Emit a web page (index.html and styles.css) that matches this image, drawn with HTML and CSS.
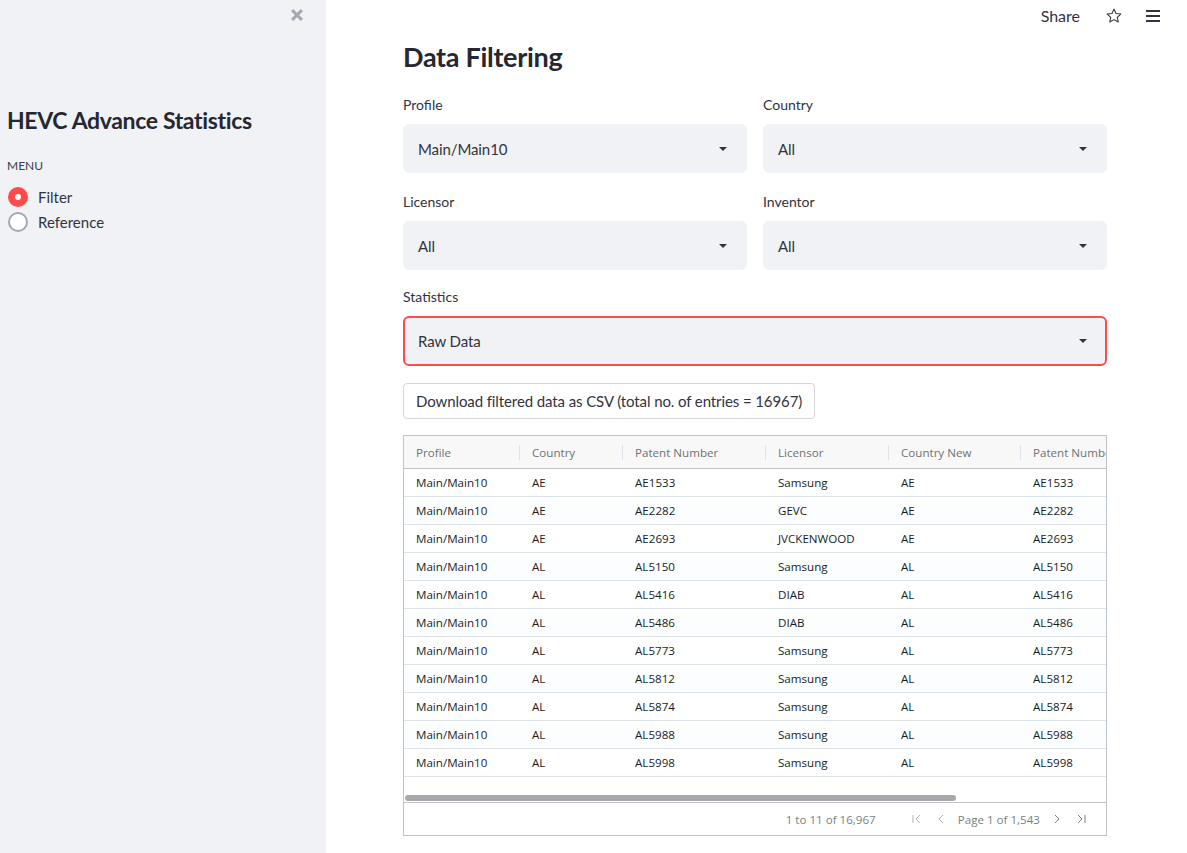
FILE: index.html
```html
<!DOCTYPE html>
<html lang="en">
<head>
<meta charset="utf-8">
<title>HEVC Advance Statistics</title>
<link rel="stylesheet" href="styles.css">
</head>
<body>
<div class="app">
  <aside class="sidebar">
    <div class="sidebar-top">
      <svg class="close-icon" width="18" height="18" viewBox="0 0 24 24"><path d="M5.5 5.5L18.5 18.5M18.5 5.5L5.5 18.5" fill="none" stroke="#a3a8b4" stroke-width="4" stroke-linecap="butt"/></svg>
    </div>
    <h2 class="side-title">HEVC Advance Statistics</h2>
    <div class="menu-label">MENU</div>
    <div class="radio-group">
      <div class="radio-item"><span class="radio checked"></span><span class="radio-text">Filter</span></div>
      <div class="radio-item"><span class="radio"></span><span class="radio-text">Reference</span></div>
    </div>
  </aside>
  <main class="main">
    <header class="toolbar">
      <span class="share">Share</span>
      <svg class="star" width="18" height="18" viewBox="0 0 24 24"><path d="M12 2.8l2.7 5.9 6.4.7-4.8 4.3 1.4 6.3L12 16.8l-5.7 3.2 1.4-6.3-4.8-4.3 6.4-.7z" fill="none" stroke="#31333f" stroke-width="1.4" stroke-linejoin="round"/></svg>
      <svg class="burger" width="16" height="16" viewBox="0 0 16 16"><path d="M1 3h14M1 8h14M1 13h14" stroke="#31333f" stroke-width="1.8"/></svg>
    </header>
    <div class="content">
      <h1 class="title">Data Filtering</h1>
      <div class="grid2">
        <div class="widget">
          <label class="wlabel">Profile</label>
          <div class="select"><span>Main/Main10</span><span class="caret"></span></div>
        </div>
        <div class="widget">
          <label class="wlabel">Country</label>
          <div class="select"><span>All</span><span class="caret"></span></div>
        </div>
        <div class="widget">
          <label class="wlabel">Licensor</label>
          <div class="select"><span>All</span><span class="caret"></span></div>
        </div>
        <div class="widget">
          <label class="wlabel">Inventor</label>
          <div class="select"><span>All</span><span class="caret"></span></div>
        </div>
      </div>
      <div class="widget">
        <label class="wlabel">Statistics</label>
        <div class="select focused"><span>Raw Data</span><span class="caret"></span></div>
      </div>
      <button class="dl-btn">Download filtered data as CSV (total no. of entries = 16967)</button>
      <div class="table">
        <div class="thead row">
          <div class="th">Profile</div>
          <div class="th">Country</div>
          <div class="th">Patent Number</div>
          <div class="th">Licensor</div>
          <div class="th">Country New</div>
          <div class="th">Patent Number</div>
        </div>
        <div class="tbody">
          <div class="row tr"><div>Main/Main10</div><div>AE</div><div>AE1533</div><div>Samsung</div><div>AE</div><div>AE1533</div></div>
          <div class="row tr"><div>Main/Main10</div><div>AE</div><div>AE2282</div><div>GEVC</div><div>AE</div><div>AE2282</div></div>
          <div class="row tr"><div>Main/Main10</div><div>AE</div><div>AE2693</div><div>JVCKENWOOD</div><div>AE</div><div>AE2693</div></div>
          <div class="row tr"><div>Main/Main10</div><div>AL</div><div>AL5150</div><div>Samsung</div><div>AL</div><div>AL5150</div></div>
          <div class="row tr"><div>Main/Main10</div><div>AL</div><div>AL5416</div><div>DIAB</div><div>AL</div><div>AL5416</div></div>
          <div class="row tr"><div>Main/Main10</div><div>AL</div><div>AL5486</div><div>DIAB</div><div>AL</div><div>AL5486</div></div>
          <div class="row tr"><div>Main/Main10</div><div>AL</div><div>AL5773</div><div>Samsung</div><div>AL</div><div>AL5773</div></div>
          <div class="row tr"><div>Main/Main10</div><div>AL</div><div>AL5812</div><div>Samsung</div><div>AL</div><div>AL5812</div></div>
          <div class="row tr"><div>Main/Main10</div><div>AL</div><div>AL5874</div><div>Samsung</div><div>AL</div><div>AL5874</div></div>
          <div class="row tr"><div>Main/Main10</div><div>AL</div><div>AL5988</div><div>Samsung</div><div>AL</div><div>AL5988</div></div>
          <div class="row tr"><div>Main/Main10</div><div>AL</div><div>AL5998</div><div>Samsung</div><div>AL</div><div>AL5998</div></div>
        </div>
        <div class="hscroll"><div class="thumb"></div></div>
        <div class="tfoot">
          <span class="count">1 to 11 of 16,967</span>
          <svg class="pg" width="12" height="12" viewBox="0 0 12 12"><path d="M2 2v8M9 2L5 6l4 4" fill="none" stroke="#aeb2b8" stroke-width="1"/></svg>
          <svg class="pg" width="12" height="12" viewBox="0 0 12 12"><path d="M8 2L4 6l4 4" fill="none" stroke="#aeb2b8" stroke-width="1"/></svg>
          <span class="page">Page 1 of 1,543</span>
          <svg class="pg" width="12" height="12" viewBox="0 0 12 12"><path d="M4 2l4 4-4 4" fill="none" stroke="#7a7f85" stroke-width="1"/></svg>
          <svg class="pg" width="12" height="12" viewBox="0 0 12 12"><path d="M3 2l4 4-4 4M10 2v8" fill="none" stroke="#7a7f85" stroke-width="1"/></svg>
        </div>
      </div>
    </div>
  </main>
</div>
</body>
</html>
```
FILE: styles.css
```css
* { box-sizing: border-box; }
html, body { margin: 0; padding: 0; }
body {
  font-family: Lato, "Liberation Sans", sans-serif;
  color: #262730;
  background: #ffffff;
  width: 1187px;
  height: 853px;
  overflow: hidden;
}
.app { display: flex; height: 853px; }
.sidebar {
  width: 326px;
  flex: 0 0 326px;
  background: #f0f2f6;
  padding: 0 0 0 7px;
}
.sidebar-top {
  display: flex;
  justify-content: flex-end;
  padding: 6px 20px 0 0;
  height: 26px;
}
.side-title {
  margin: 79px 0 0 0;
  font-size: 23px;
  font-weight: 700;
  line-height: 30px;
  letter-spacing: -0.35px;
}
.menu-label {
  margin-top: 23px;
  font-size: 12px;
  line-height: 16px;
  color: #3c3d47;
}
.radio-group { margin-top: 13px; display: flex; flex-direction: column; gap: 5px; }
.radio-item { display: flex; align-items: center; gap: 10px; height: 20px; }
.radio {
  width: 20px; height: 20px; border-radius: 50%;
  border: 2px solid #a3a8b4; background: #fff; position: relative;
  margin-left: 1px;
}
.radio.checked {
  border: none; background: #ff4b4b;
}
.radio.checked::after {
  content: ""; position: absolute; left: 7px; top: 7px; width: 6px; height: 6px; border-radius: 50%; background: #fff;
}
.radio-text { font-size: 15px; color: #31333f; }

.main { flex: 1; }
.toolbar {
  height: 31px;
  display: flex;
  align-items: center;
  justify-content: flex-end;
  padding-right: 26px;
}
.share { font-size: 16px; color: #31333f; margin-right: 25px; }
.star { margin-right: 22px; }
.content { width: 704px; margin-left: 77px; }
.title {
  margin: 9px 0 0 0;
  font-size: 27px;
  font-weight: 700;
  line-height: 34px;
  letter-spacing: -0.3px;
  color: #262730;
}
.grid2 {
  display: grid;
  grid-template-columns: 1fr 1fr;
  column-gap: 16px;
  row-gap: 19px;
  margin-top: 21px;
}
.content > .widget { margin-top: 17px; }
.widget { display: flex; flex-direction: column; }
.wlabel {
  font-size: 14px;
  line-height: 19px;
  margin-bottom: 10px;
  color: #31333f;
}
.select {
  height: 49px;
  background: #f0f2f6;
  border-radius: 6px;
  display: flex;
  align-items: center;
  justify-content: space-between;
  padding: 0 19px 0 14px;
  font-size: 15px;
  letter-spacing: -0.1px;
  color: #31333f;
  border: 1px solid #f0f2f6;
}
.select.focused { border: 2px solid #ff4b4b; padding-left: 13px; padding-right: 18px; height: 50px; }
.caret {
  width: 0; height: 0;
  border-left: 4px solid transparent;
  border-right: 4px solid transparent;
  border-top: 4px solid #31333f;
}
.dl-btn {
  margin-top: 17px;
  height: 36px;
  padding: 0 12px;
  font-family: inherit;
  font-size: 15px;
  letter-spacing: -0.1px;
  color: #31333f;
  background: #fff;
  border: 1px solid #d6d6d9;
  border-radius: 4px;
  display: block;
}
.table {
  margin-top: 16px;
  border: 1px solid #bdc3c7;
  overflow: hidden;
  font-family: "Open Sans", "Noto Sans", sans-serif;
  font-size: 11.6px;
}
.row {
  display: grid;
  grid-template-columns: 116px 103px 143px 123px 132px 160px;
  width: 800px;
}
.row > div { padding-left: 12px; white-space: nowrap; overflow: hidden; }
.thead {
  height: 33px;
  background: #f8f8f8;
  border-bottom: 1px solid #bdc3c7;
  align-items: center;
  color: #6f7276;
}
.th { position: relative; }
.th::after {
  content: ""; position: absolute; right: 0; top: -1px; width: 1px; height: 18px; background: #dde2eb;
}
.tr {
  height: 28px;
  align-items: center;
  border-bottom: 1px solid #dde2eb;
  color: #181d1f;
}
.tr:nth-child(even) { background: #fcfdfe; }
.hscroll { height: 25px; display: flex; align-items: flex-end; padding: 0 0 1px 1px; }
.thumb { width: 551px; height: 6px; background: #a9a9ad; border-radius: 3px; }
.tfoot {
  height: 33px;
  border-top: 1px solid #bdc3c7;
  display: flex;
  align-items: center;
  justify-content: flex-end;
  padding-right: 13px;
  color: #7a7f85;
}
.count { margin-right: 29px; }
.pg { margin: 0 6px; }
.page { margin: 0 5px; }
```
